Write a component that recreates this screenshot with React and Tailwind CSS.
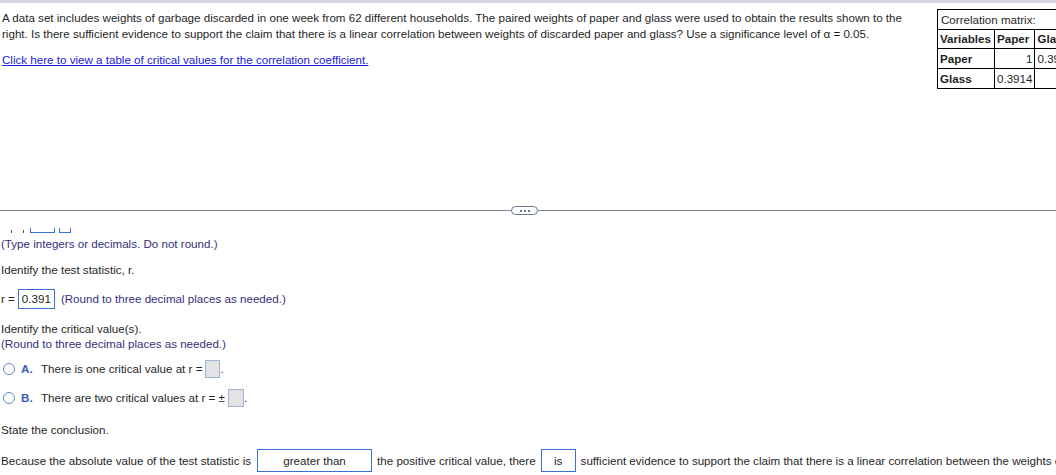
import React from 'react';

const FONT = { fontFamily: '"Liberation Sans", Arial, sans-serif' };

function Radio({ letter, children }) {
  return (
    <div className="flex items-center h-[18px]">
      <span className="w-[12px] h-[12px] rounded-full border-[1.5px] border-[#5f86cc] ml-[2px] shrink-0" />
      <span className="ml-[6px] w-[20px] font-bold text-[#3a5cb8]">{letter}.</span>
      <span>{children}</span>
    </div>
  );
}

function EmptyBox({ className }) {
  return <span className={`inline-block shrink-0 h-[18px] bg-[#e3e3e3] border border-[#9fb3d9] ${className}`} />;
}

export default function App() {
  return (
    <div className="w-[1056px] h-[475px] overflow-hidden bg-white text-[11.6px] text-[#1f1f1f]" style={FONT}>
      <div className="h-[3px] bg-[#d3d8e0]" />

      {/* question + matrix */}
      <div className="flex h-[207px]">
        <div className="w-[935px] shrink-0 pl-[2px] pt-[7px]">
          <p className="leading-[16px]">
            A data set includes weights of garbage discarded in one week from 62 different households. The paired weights of paper and glass were used to obtain the results shown to the
            <br />
            right. Is there sufficient evidence to support the claim that there is a linear correlation between weights of discarded paper and glass? Use a significance level of α = 0.05.
          </p>
          <a href="#" className="block mt-[10px] leading-[16px] text-[#2020e0] underline">
            Click here to view a table of critical values for the correlation coefficient.
          </a>
        </div>
        <div className="pt-[6px] pl-[2px] shrink-0">
          <table className="border-collapse text-[11.6px] leading-[14px]">
            <tbody>
              <tr className="h-[20px]">
                <td colSpan={3} className="border border-black px-[3px]">Correlation matrix:</td>
              </tr>
              <tr className="h-[19px] font-bold">
                <td className="border border-black px-[2px] w-[57px]">Variables</td>
                <td className="border border-black px-[2px] w-[40px]">Paper</td>
                <td className="border border-black px-[2px] w-[46px]">Glass</td>
              </tr>
              <tr className="h-[20px]">
                <td className="border border-black px-[2px] font-bold">Paper</td>
                <td className="border border-black px-[2px] text-right">1</td>
                <td className="border border-black px-[2px]">0.3914</td>
              </tr>
              <tr className="h-[20px]">
                <td className="border border-black px-[2px] font-bold">Glass</td>
                <td className="border border-black px-[2px]">0.3914</td>
                <td className="border border-black px-[2px]" />
              </tr>
            </tbody>
          </table>
        </div>
      </div>

      {/* divider */}
      <div className="relative h-px bg-[#7f8a99]">
        <span className="absolute left-[511px] top-[-4px] w-[27px] h-[9px] rounded-full border border-[#6b7785] bg-white flex items-center justify-center gap-[2px]">
          <span className="w-[2px] h-[2px] bg-[#6b7785]" />
          <span className="w-[2px] h-[2px] bg-[#6b7785]" />
          <span className="w-[2px] h-[2px] bg-[#6b7785]" />
        </span>
      </div>

      <div className="pl-[1px]">
        {/* partially scrolled row */}
        <div className="h-[25px] pt-[17px]">
          <div className="h-[6px] relative overflow-hidden">
            <div className="absolute bottom-[1px] left-0 flex items-end">
              <span className="ml-[10px] w-px h-[3px] bg-[#555]" />
              <span className="ml-[11px] w-px h-[3px] bg-[#555]" />
              <span className="ml-[6px] w-[25px] h-[18px] border border-[#3b6fd1]" />
              <span className="ml-[4px] w-[12px] h-[18px] border border-[#3b6fd1]" />
            </div>
          </div>
        </div>
        <p className="leading-[16px] text-[#33307a]">(Type integers or decimals. Do not round.)</p>

        <p className="mt-[10px] leading-[16px]">Identify the test statistic, r.</p>

        <div className="mt-[11px] flex items-center h-[20px]">
          <span>r =</span>
          <span className="ml-[3px] h-[20px] px-[3px] border border-[#3b6fd1] flex items-center">0.391</span>
          <span className="ml-[6px] text-[#33307a]">(Round to three decimal places as needed.)</span>
        </div>

        <div className="mt-[12px] leading-[15px]">
          <p>Identify the critical value(s).</p>
          <p className="text-[#33307a]">(Round to three decimal places as needed.)</p>
        </div>

        <div className="mt-[9px]">
          <Radio letter="A">
            <span className="flex items-center">There is one critical value at r = <EmptyBox className="ml-[3px] w-[15px]" />.</span>
          </Radio>
        </div>
        <div className="mt-[11px]">
          <Radio letter="B">
            <span className="flex items-center">There are two critical values at r = ± <EmptyBox className="ml-[3px] w-[16px]" />.</span>
          </Radio>
        </div>

        <p className="mt-[15px] leading-[16px]">State the conclusion.</p>

        <div className="mt-[11px] flex items-center whitespace-nowrap">
          <span className="shrink-0">Because the absolute value of the test statistic is</span>
          <span className="shrink-0 ml-[6px] w-[115px] h-[23px] border border-[#3b6fd1] flex items-center justify-center">greater than</span>
          <span className="shrink-0 ml-[5px]">the positive critical value, there</span>
          <span className="shrink-0 ml-[5px] w-[35px] h-[23px] border border-[#3b6fd1] flex items-center justify-center">is</span>
          <span className="shrink-0 ml-[5px]">sufficient evidence to support the claim that there is a linear correlation between the weights of discarded paper and glass.</span>
        </div>
      </div>
    </div>
  );
}
